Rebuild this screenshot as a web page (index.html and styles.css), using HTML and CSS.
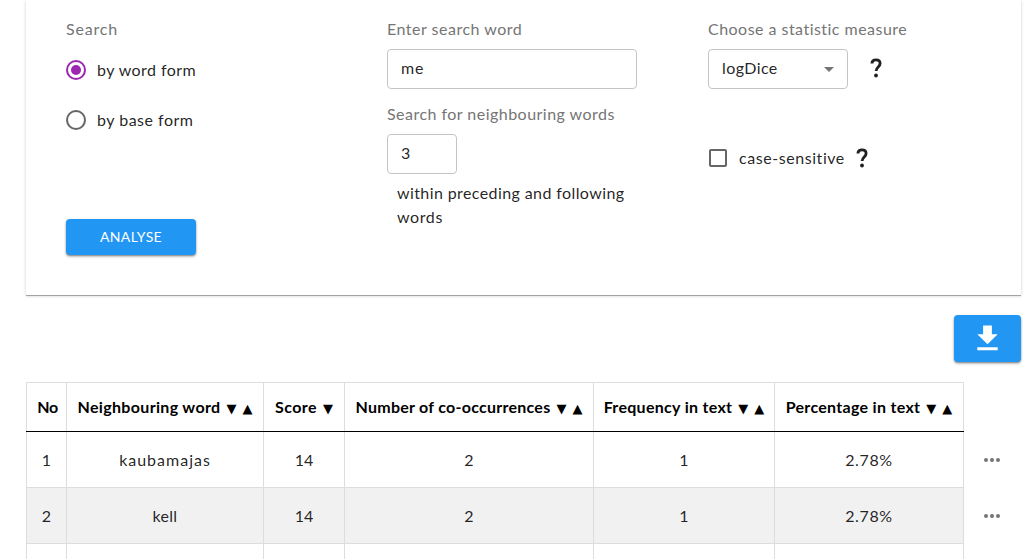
FILE: index.html
```html
<!DOCTYPE html>
<html lang="en">
<head>
<meta charset="utf-8">
<title>Neighbouring words</title>
<link rel="stylesheet" href="styles.css">
</head>
<body>
<main class="page">
  <section class="card">
    <div class="col">
      <div class="label"><span class="t-search">Search</span></div>
      <div class="radio"><svg class="icon" viewBox="0 0 24 24" fill="#9c27b0"><path d="M12 2a10 10 0 100 20 10 10 0 000-20zm0 18a8 8 0 110-16 8 8 0 010 16z"/><circle cx="12" cy="12" r="5"/></svg><span class="t-wordform">by word form</span></div>
      <div class="radio"><svg class="icon" viewBox="0 0 24 24" fill="#666"><path d="M12 2a10 10 0 100 20 10 10 0 000-20zm0 18a8 8 0 110-16 8 8 0 010 16z"/></svg><span class="t-baseform">by base form</span></div>
      <button class="btn analyse"><span class="t-analyse">ANALYSE</span></button>
    </div>
    <div class="col">
      <div class="label"><span class="t-enter">Enter search word</span></div>
      <div class="field field-word"><span class="t-me">me</span></div>
      <div class="label label-second"><span class="t-neigh">Search for neighbouring words</span></div>
      <div class="field field-count"><span>3</span></div>
      <p class="hint"><span class="t-within">within preceding and following</span><br><span class="t-words">words</span></p>
    </div>
    <div class="col">
      <div class="label"><span class="t-choose">Choose a statistic measure</span></div>
      <div class="measure">
        <div class="field field-select"><span class="t-dice">logDice</span><svg class="icon" viewBox="0 0 24 24" fill="#757575"><path d="M7 10l5 5 5-5z"/></svg></div>
        <svg class="help" viewBox="0 0 24 24"><path d="M7.9 7.5C8 4.7 9.5 3.8 12 3.8c2.7 0 4.1 1.5 4.1 3.7 0 3.4-4 3.5-4 7.5"/><circle cx="12" cy="19.5" r="1.9"/></svg>
      </div>
      <div class="check"><svg class="icon" viewBox="0 0 24 24" fill="#666"><path d="M19 5v14H5V5h14m0-2H5c-1.1 0-2 .9-2 2v14c0 1.1.9 2 2 2h14c1.1 0 2-.9 2-2V5c0-1.1-.9-2-2-2z"/></svg><span class="t-case">case-sensitive</span>
        <svg class="help" viewBox="0 0 24 24"><path d="M7.9 7.5C8 4.7 9.5 3.8 12 3.8c2.7 0 4.1 1.5 4.1 3.7 0 3.4-4 3.5-4 7.5"/><circle cx="12" cy="19.5" r="1.9"/></svg>
      </div>
    </div>
  </section>
  <div class="toolbar"><button class="btn download"><svg viewBox="0 0 24 24" fill="#fff"><path d="M19 9h-4V3H9v6H5l7 7 7-7zM5 18v2h14v-2H5z"/></svg></button></div>
  <table class="results">
    <colgroup><col class="c-no"><col class="c-word"><col class="c-score"><col class="c-count"><col class="c-freq"><col class="c-pct"><col class="c-more"></colgroup>
    <thead><tr>
      <th><span class="h-no">No</span></th>
      <th><span class="h-word">Neighbouring word</span><span class="sort">▼</span><span class="sort">▲</span></th>
      <th><span class="h-score">Score</span><span class="sort">▼</span></th>
      <th><span class="h-count">Number of co-occurrences</span><span class="sort">▼</span><span class="sort">▲</span></th>
      <th><span class="h-freq">Frequency in text</span><span class="sort">▼</span><span class="sort">▲</span></th>
      <th><span class="h-pct">Percentage in text</span><span class="sort">▼</span><span class="sort">▲</span></th>
      <td class="more"></td>
    </tr></thead>
    <tbody>
      <tr><td>1</td><td><span class="t-kauba">kaubamajas</span></td><td>14</td><td>2</td><td>1</td><td><span class="t-pct">2.78%</span></td><td class="more"><svg class="icon" viewBox="0 0 24 24" fill="#757575"><circle cx="6" cy="12" r="2"/><circle cx="12" cy="12" r="2"/><circle cx="18" cy="12" r="2"/></svg></td></tr>
      <tr class="alt"><td>2</td><td><span class="t-kell">kell</span></td><td>14</td><td>2</td><td>1</td><td><span class="t-pct">2.78%</span></td><td class="more"><svg class="icon" viewBox="0 0 24 24" fill="#757575"><circle cx="6" cy="12" r="2"/><circle cx="12" cy="12" r="2"/><circle cx="18" cy="12" r="2"/></svg></td></tr>
      <tr class="last"><td></td><td></td><td></td><td></td><td></td><td></td><td class="more"></td></tr>
    </tbody>
  </table>
</main>
</body>
</html>
```
FILE: styles.css
```css
* { box-sizing: border-box; }
body {
  margin: 0;
  height: 559px;
  overflow: hidden;
  background: #fff;
  color: rgba(0, 0, 0, 0.87);
  font: 16px/24px Lato, "Open Sans", sans-serif;
}
.page { padding-left: 26px; }
.card {
  display: grid;
  grid-template-columns: 321px 321px 1fr;
  width: 995px;
  height: 295px;
  padding: 17px 0 0 40px;
  box-shadow: 0 1px 0 #a3a3a3, 0 1px 3px rgba(0, 0, 0, 0.2);
}
.label { height: 24px; color: #757575; white-space: nowrap; }
.icon { width: 24px; height: 24px; flex: none; display: block; }
.radio { display: flex; align-items: center; height: 50px; gap: 9px; margin-left: -2px; }
.label + .radio { margin-top: 4px; }
.btn {
  display: flex;
  align-items: center;
  justify-content: center;
  padding: 0;
  border: 0;
  border-radius: 4px;
  background: #2196f3;
  color: #fff;
  font: 14px/24px Lato, "Open Sans", sans-serif;
  box-shadow: 0 1px 2px rgba(0, 0, 0, 0.4), 0 2px 3px rgba(0, 0, 0, 0.15);
}
.analyse { width: 130px; height: 36px; margin-top: 74px; }
.field {
  display: flex;
  align-items: center;
  height: 40px;
  padding: 0 13px 2px;
  border: 1px solid #c4c4c4;
  border-radius: 4px;
}
.label + .field, .measure { margin-top: 8px; }
.field-word { width: 250px; }
.field-count { width: 70px; }
.field-select { width: 140px; justify-content: space-between; padding-right: 6px; }
.field-select .icon { position: relative; top: 1px; }
.label-second { margin-top: 13px; }
.hint { margin: 7px 0 0 10px; white-space: nowrap; }
.measure { display: flex; align-items: center; gap: 16px; }
.help { width: 24px; height: 24px; flex: none; fill: #212121; overflow: visible; }
.help path { fill: none; stroke: #212121; stroke-width: 2.8; }
.measure .help { margin-top: -3px; }
.check { display: flex; align-items: center; height: 24px; margin: 57px 0 0 -2px; gap: 9px; }
.check .help { margin-left: -4px; margin-top: -1px; }
.toolbar { display: flex; justify-content: flex-end; width: 995px; margin-top: 20px; }
.download { width: 67px; height: 47px; }
.download svg { width: 35px; height: 35px; }
.results {
  width: 993px;
  margin-top: 20px;
  table-layout: fixed;
  border-collapse: collapse;
  text-align: center;
}
.c-no { width: 40px; }
.c-word { width: 197px; }
.c-score { width: 81px; }
.c-count { width: 249px; }
.c-freq { width: 181px; }
.c-pct { width: 189px; }
.c-more { width: 56px; }
.results th, .results td { height: 56px; padding: 0; border: 1px solid #ddd; white-space: nowrap; }
.results th { height: 49px; border-bottom-color: #000; color: #000; font-weight: 700; }
.results .alt td { background: #f1f1f1; }
.results .last td { height: 15px; border-bottom: 0; }
.results td.more { border: 0; background: none; }
.results thead .more { height: 49px; }
.more .icon { margin: 0 auto; }
.sort {
  display: inline-block;
  width: 10px;
  margin-left: 6px;
  font: 13px/20px "DejaVu Sans", sans-serif;
}

/* Tracking per text run */
.t-search { letter-spacing: 0.8px; }
.t-wordform { letter-spacing: 0.43px; }
.t-baseform { letter-spacing: 0.5px; }
.t-analyse { letter-spacing: 0.34px; }
.t-enter { letter-spacing: 0.5px; }
.t-me { letter-spacing: 0.9px; }
.t-neigh, .t-choose { letter-spacing: 0.47px; }
.t-within { letter-spacing: 0.4px; }
.t-words { letter-spacing: 0.6px; }
.t-dice { letter-spacing: 0.42px; }
.t-case { letter-spacing: 0.56px; }
.h-no { position: relative; left: 1px; letter-spacing: -0.3px; }
.h-word { letter-spacing: 0.33px; }
.h-score { letter-spacing: 0.4px; }
.h-count { letter-spacing: 0.26px; }
.h-freq, .h-pct { letter-spacing: 0.3px; }
.t-kauba { letter-spacing: 1px; }
.t-pct { letter-spacing: 0.65px; }
.t-kell { letter-spacing: 0.3px; }
```
